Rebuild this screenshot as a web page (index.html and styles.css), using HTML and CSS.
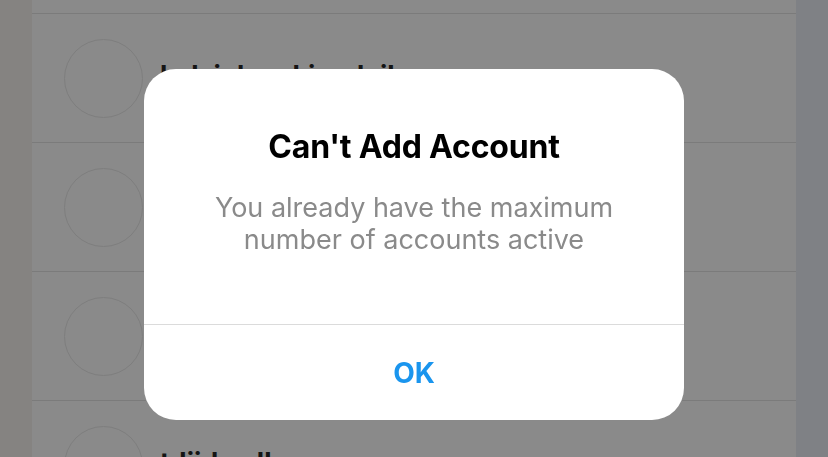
FILE: index.html
```html
<!DOCTYPE html>
<html lang="en">
<head>
<meta charset="utf-8">
<title>Can't Add Account</title>
<link rel="stylesheet" href="styles.css">
</head>
<body>
<div class="screen">
  <div class="edge edge-left"></div>
  <div class="list">
    <div class="row-top"></div>
    <div class="row">
      <div class="avatar"></div>
      <div class="info"><div class="name">kelsiehawkinsdaily</div><div class="sub">Logged in</div></div>
    </div>
    <div class="row">
      <div class="avatar"></div>
      <div class="info"><div class="name">lindabell</div><div class="sub">Logged in</div></div>
    </div>
    <div class="row">
      <div class="avatar"></div>
      <div class="info"><div class="name">haileybrook</div><div class="sub">Logged in</div></div>
    </div>
    <div class="row">
      <div class="avatar"></div>
      <div class="info"><div class="name">tdiidwalk</div><div class="sub">Logged in</div></div>
    </div>
  </div>
  <div class="edge edge-right"></div>
</div>
<div class="overlay">
  <div class="dialog">
    <div class="dialog-body">
      <div class="title">Can't Add Account</div>
      <div class="message">You already have the maximum<br>number of accounts active</div>
    </div>
    <div class="dialog-actions">
      <div class="ok">OK</div>
    </div>
  </div>
</div>
</body>
</html>
```
FILE: styles.css
```css
html, body {
  margin: 0;
  padding: 0;
  height: 100%;
  overflow: hidden;
  font-family: Inter, "Liberation Sans", sans-serif;
}
.screen {
  display: flex;
  height: 457px;
}
.edge {
  width: 32px;
  flex: none;
}
.edge-left { background: #858381; }
.edge-right { background: #7f8185; }
.list {
  flex: 1;
  background: #8a8a8a;
  overflow: hidden;
}
.row-top {
  height: 13px;
  border-bottom: 1px solid #7b7b7b;
}
.row {
  height: 128px;
  border-bottom: 1px solid #7b7b7b;
  display: flex;
  align-items: center;
  padding-left: 32px;
}
.avatar {
  width: 77px;
  height: 77px;
  border-radius: 50%;
  border: 1.5px solid #7e7e7e;
  flex: none;
}
.info {
  margin-left: 17px;
  margin-top: 24px;
}
.name {
  font-size: 27px;
  font-weight: 700;
  color: #141414;
  line-height: 32px;
}
.sub {
  font-size: 22px;
  color: #6e6e6e;
  line-height: 28px;
}
.overlay {
  position: fixed;
  inset: 0;
  display: flex;
  justify-content: center;
  align-items: flex-start;
  padding-top: 69px;
}
.dialog {
  width: 540px;
  height: 351px;
  background: #ffffff;
  border-radius: 32px;
  display: flex;
  flex-direction: column;
  overflow: hidden;
}
.dialog-body {
  height: 256px;
  box-sizing: border-box;
  padding-top: 58px;
  text-align: center;
  border-bottom: 1px solid #dbdbdb;
}
.title {
  font-size: 32px;
  font-weight: 700;
  line-height: 40px;
  color: #000;
  letter-spacing: -0.2px;
}
.message {
  margin-top: 25px;
  font-size: 27px;
  line-height: 32px;
  color: #8a8a8a;
}
.dialog-actions {
  flex: 1;
  display: flex;
  align-items: center;
  justify-content: center;
}
.ok {
  font-size: 28px;
  font-weight: 700;
  color: #1a95ee;
  line-height: 34px;
}
```
